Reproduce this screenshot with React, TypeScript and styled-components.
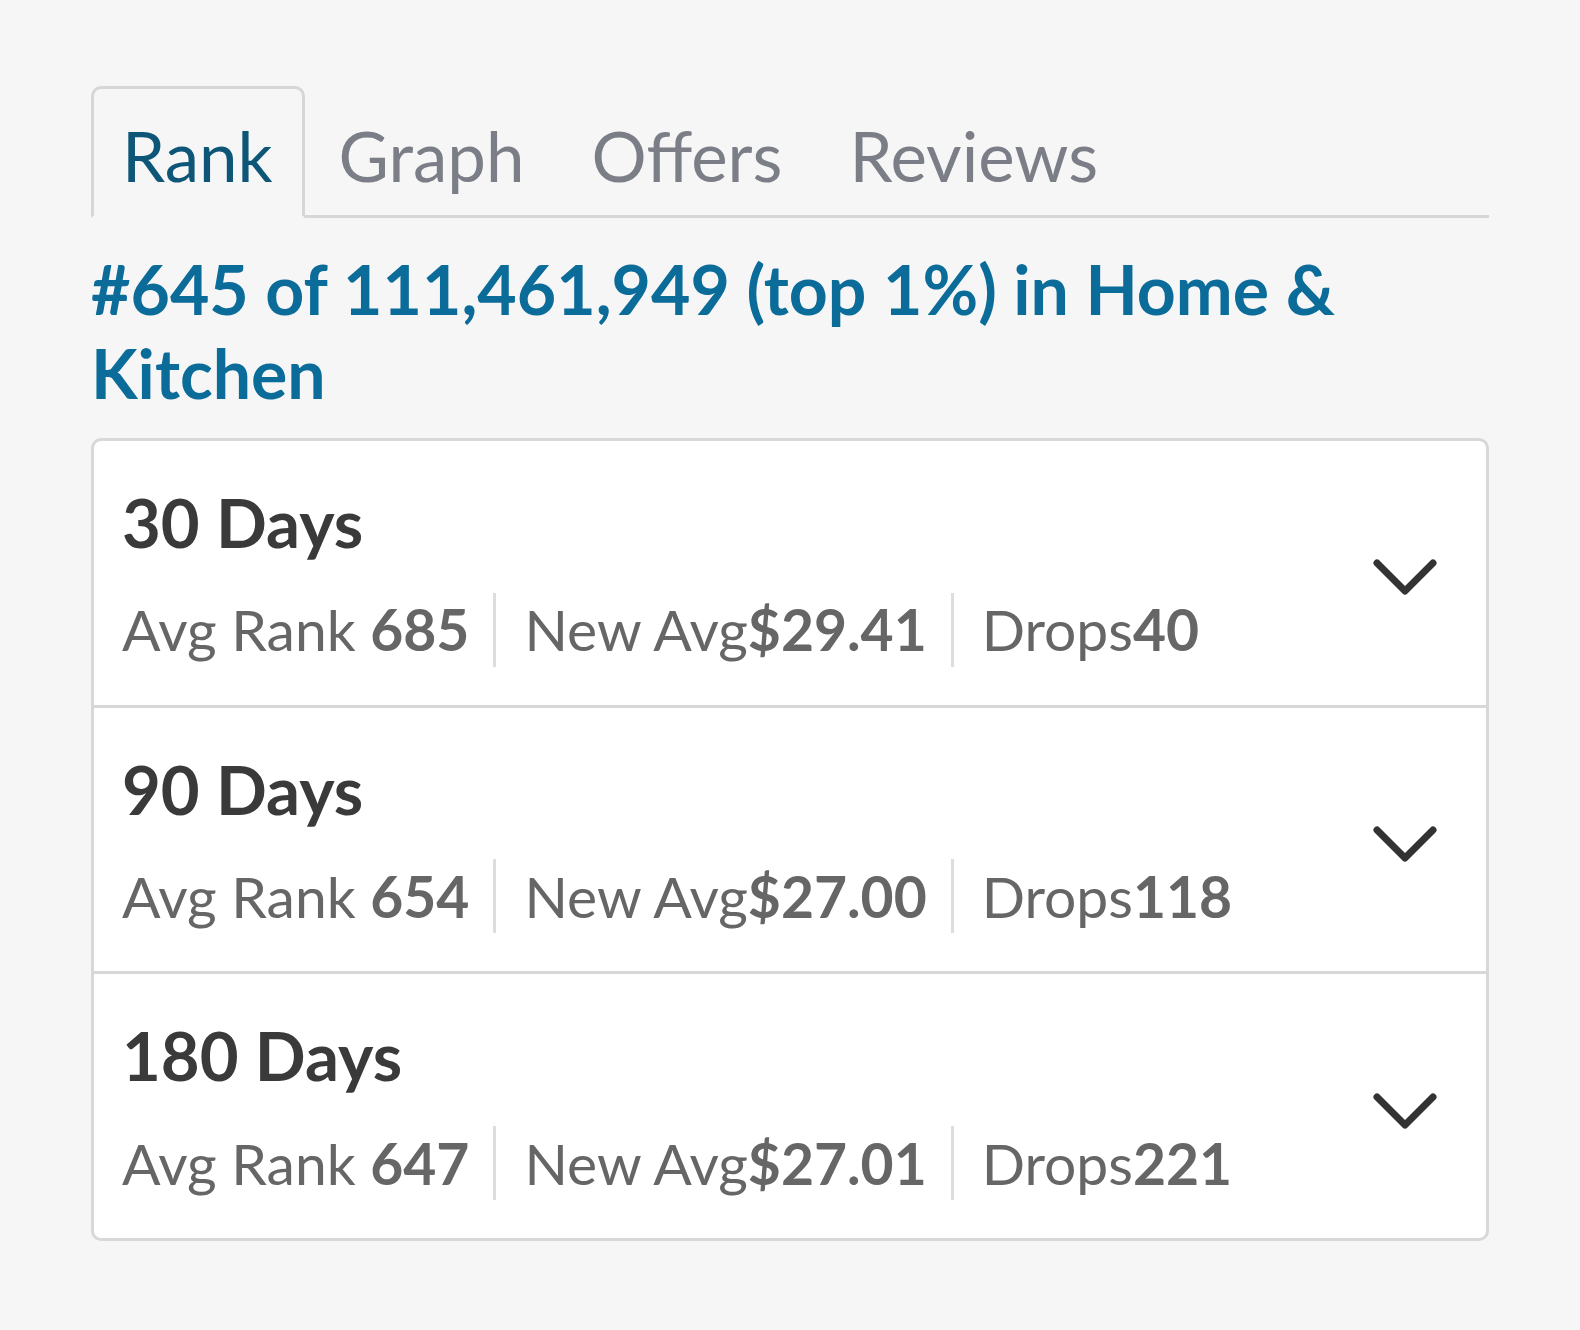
import React from "react";
import styled, { createGlobalStyle } from "styled-components";

const GlobalStyle = createGlobalStyle`
  html, body {
    margin: 0;
    padding: 0;
    background: #f6f6f6;
    font-family: Lato, "Open Sans", sans-serif;
  }
`;

type TPeriod = {
  label: string;
  rank: string;
  newAvg: string;
  drops: string;
};

const periods: TPeriod[] = [
  { label: "30 Days", rank: "685", newAvg: "$29.41", drops: "40" },
  { label: "90 Days", rank: "654", newAvg: "$27.00", drops: "118" },
  { label: "180 Days", rank: "647", newAvg: "$27.01", drops: "221" },
];

const tabs = ["Rank", "Graph", "Offers", "Reviews"];

const Page = styled.div`
  width: 1580px;
  min-height: 1330px;
  box-sizing: border-box;
  padding: 86px 91px 0 91px;
`;

const TabBar = styled.div`
  display: flex;
  align-items: flex-start;
  border-bottom: 3px solid #d6d6d6;
  height: 132px;
  box-sizing: border-box;
`;

const Tab = styled.div<{ $active?: boolean }>`
  height: ${(p) => (p.$active ? "132px" : "auto")};
  box-sizing: border-box;
  padding: ${(p) => (p.$active ? "26px 29px 0 28px" : "26px 30px 0 31px")};
  border: ${(p) => (p.$active ? "3px solid #d6d6d6" : "3px solid transparent")};
  border-bottom: ${(p) => (p.$active ? "3px solid #f6f6f6" : "none")};
  border-radius: 10px 10px 0 0;
  font-size: 69px;
  line-height: 1.2;
  color: ${(p) => (p.$active ? "#0e5677" : "#7b7e86")};
`;

const Heading = styled.h1`
  margin: 29px 0 23px;
  font-size: 68px;
  line-height: 84px;
  font-weight: 700;
  color: #0b6b99;
  max-width: 1300px;
`;

const Card = styled.div`
  background: #ffffff;
  border: 3px solid #d8d8d8;
  border-radius: 10px;
  overflow: hidden;
`;

const Row = styled.div`
  display: flex;
  align-items: center;
  padding: 45px 49px 38px 28px;
  & + & {
    border-top: 3px solid #d8d8d8;
  }
`;

const RowBody = styled.div`
  flex: 1;
  display: flex;
  flex-direction: column;
  gap: 33px;
`;

const Title = styled.div`
  font-size: 67px;
  line-height: 1.1;
  font-weight: 700;
  color: #3a3a3a;
`;

const Stats = styled.div`
  display: flex;
  align-items: center;
  font-size: 57px;
  line-height: 1.2;
  color: #666666;
`;

const Stat = styled.span`
  padding: 0 24px 0 28px;
  &:first-child {
    padding-left: 0;
  }
  b {
    font-weight: 700;
  }
`;

const Divider = styled.span`
  width: 3px;
  height: 74px;
  background: #dddddd;
`;

const ChevronBox = styled.div`
  margin-top: 2px;
  display: flex;
`;

const Chevron = () => (
  <svg width="64" height="36" viewBox="0 0 64 36" fill="none">
    <path
      d="M4 4 L32 32 L60 4"
      stroke="#333"
      strokeWidth="7"
      strokeLinecap="round"
      strokeLinejoin="round"
    />
  </svg>
);

const App = () => {
  return (
    <>
      <GlobalStyle />
      <Page>
        <TabBar>
          {tabs.map((t, i) => (
            <Tab key={t} $active={i === 0}>
              {t}
            </Tab>
          ))}
        </TabBar>
        <Heading>#645 of 111,461,949 (top 1%) in Home &amp; Kitchen</Heading>
        <Card>
          {periods.map((p) => (
            <Row key={p.label}>
              <RowBody>
                <Title>{p.label}</Title>
                <Stats>
                  <Stat>
                    Avg Rank <b>{p.rank}</b>
                  </Stat>
                  <Divider />
                  <Stat>
                    New Avg<b>{p.newAvg}</b>
                  </Stat>
                  <Divider />
                  <Stat>
                    Drops<b>{p.drops}</b>
                  </Stat>
                </Stats>
              </RowBody>
              <ChevronBox>
                <Chevron />
              </ChevronBox>
            </Row>
          ))}
        </Card>
      </Page>
    </>
  );
};

export default App;
